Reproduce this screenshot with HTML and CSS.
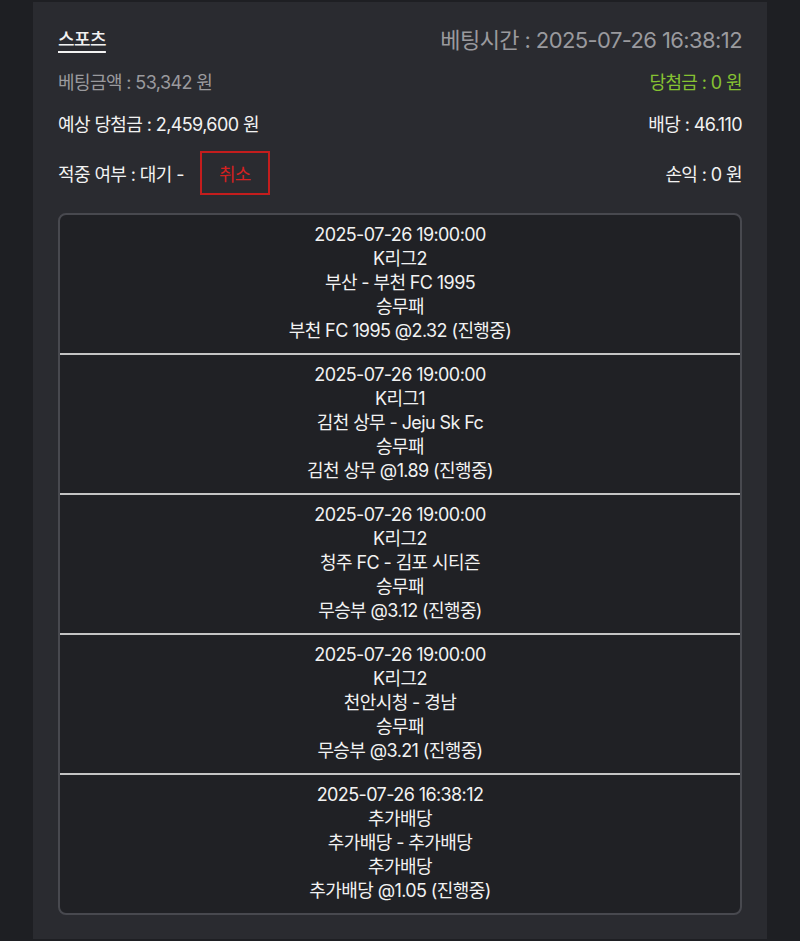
FILE: index.html
```html
<!DOCTYPE html>
<html lang="ko">
<head>
    <meta charset="UTF-8">
    <meta name="viewport" content="width=device-width, initial-scale=1.0">
    <title>베팅내역</title>
    <link rel="stylesheet" href="styles.css">
</head>
<body>
<div class="container">
    <div class="bet-card">
        <div class="bet-row">
            <span class="bet-type">스포츠</span>
            <span class="bet-time">베팅시간 : 2025-07-26 16:38:12</span>
        </div>
        <div class="bet-row row-amount">
            <span class="muted">베팅금액 : 53,342 원</span>
            <span class="win">당첨금 : 0 원</span>
        </div>
        <div class="bet-row row-expect">
            <span>예상 당첨금 : 2,459,600 원</span>
            <span>배당 : 46.110</span>
        </div>
        <div class="bet-row row-result">
            <span class="result">적중 여부 : 대기 - <button type="button" class="cancel-button">취소</button></span>
            <span>손익 : 0 원</span>
        </div>

        <div class="game-list">
            <div class="game-item">
                <div>2025-07-26 19:00:00</div>
                <div>K리그2</div>
                <div>부산 - 부천 FC 1995</div>
                <div>승무패</div>
                <div>부천 FC 1995 @2.32 (진행중)</div>
            </div>
            <div class="game-item">
                <div>2025-07-26 19:00:00</div>
                <div>K리그1</div>
                <div>김천 상무 - Jeju Sk Fc</div>
                <div>승무패</div>
                <div>김천 상무 @1.89 (진행중)</div>
            </div>
            <div class="game-item">
                <div>2025-07-26 19:00:00</div>
                <div>K리그2</div>
                <div>청주 FC - 김포 시티즌</div>
                <div>승무패</div>
                <div>무승부 @3.12 (진행중)</div>
            </div>
            <div class="game-item">
                <div>2025-07-26 19:00:00</div>
                <div>K리그2</div>
                <div>천안시청 - 경남</div>
                <div>승무패</div>
                <div>무승부 @3.21 (진행중)</div>
            </div>
            <div class="game-item">
                <div>2025-07-26 16:38:12</div>
                <div>추가배당</div>
                <div>추가배당 - 추가배당</div>
                <div>추가배당</div>
                <div>추가배당 @1.05 (진행중)</div>
            </div>
        </div>
    </div>
</div>
</body>
</html>
```

FILE: styles.css
```css
:root {
    --bg: #1e1f23;
    --panel: #2a2b30;
    --list: #202125;
    --light: #f2f2f2;
    --muted: #9a9a9e;
    --green: #86c232;
    --red: #c41d1d;
}
* {
    margin: 0;
    padding: 0;
    box-sizing: border-box;
    font-family: Inter, "Noto Sans CJK KR", sans-serif;
}
body {
    background: var(--bg);
    color: var(--light);
    min-height: 100vh;
}
.container {
    width: 734px;
    margin: 0 auto;
    padding-top: 2px;
}
.bet-card {
    background: var(--panel);
    padding: 20px 25px 24px;
    min-height: 936px;
}
.bet-row {
    display: flex;
    justify-content: space-between;
    align-items: center;
    font-size: 18px;
    letter-spacing: -0.6px;
}
.bet-type {
    font-size: 18px;
    font-weight: 500;
    text-decoration: underline;
    text-underline-offset: 5px;
    text-decoration-thickness: 2px;
}
.bet-time {
    font-size: 22px;
    color: var(--muted);
}
.row-amount {
    margin-top: 14px;
}
.row-expect {
    margin-top: 16px;
}
.row-result {
    margin-top: 15px;
}
.muted {
    color: var(--muted);
}
.win {
    color: var(--green);
}
.result {
    display: flex;
    align-items: center;
}
.cancel-button {
    margin-left: 16px;
    width: 70px;
    height: 44px;
    background: transparent;
    border: 2px solid var(--red);
    color: #d42121;
    font-size: 18px;
    letter-spacing: -0.6px;
    cursor: pointer;
}
.game-list {
    margin-top: 18px;
    background: var(--list);
    border: 2px solid #48494f;
    border-radius: 8px;
    overflow: hidden;
}
.game-item {
    padding: 8px 0 10px;
    text-align: center;
    font-size: 18px;
    line-height: 24px;
    letter-spacing: -0.6px;
    border-bottom: 2px solid #c4c4c4;
}
.game-item:last-child {
    border-bottom: none;
}
```
